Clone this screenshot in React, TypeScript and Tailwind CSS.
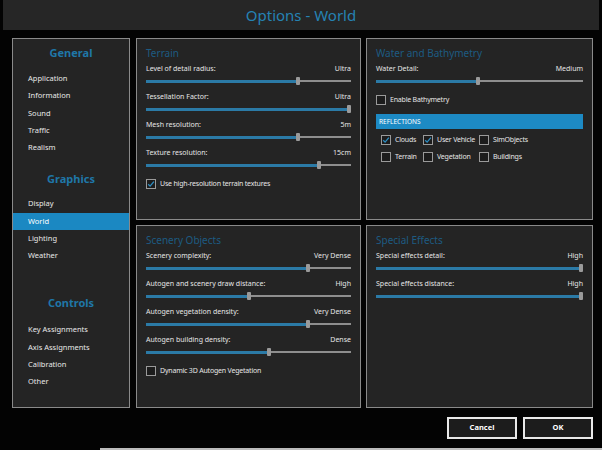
import React from "react";

type SliderProps = { label: string; value: string; pct: number };

function Slider({ label, value, pct }: SliderProps) {
  return (
    <div className="mt-[7px] first:mt-0">
      <div className="flex justify-between text-[7px] leading-[10px] text-[#e6e6e6]">
        <span>{label}</span>
        <span>{value}</span>
      </div>
      <div className="mt-[3px] flex h-[8px] items-center">
        <div className="h-[3px] bg-[#2b7aa6]" style={{ width: `calc(${pct}% - 2px)` }} />
        <div className="h-[8px] w-[4px] shrink-0 rounded-[1px] bg-[#9a9a9a]" />
        <div className="h-[2px] flex-1 bg-[#8e8e8e]" />
      </div>
    </div>
  );
}

function Check({ label, checked = false }: { label: string; checked?: boolean }) {
  return (
    <div className="flex items-center gap-[4px]">
      <div className="flex h-[10px] w-[10px] shrink-0 items-center justify-center border border-[#9a9a9a] bg-[#1c1c1c]">
        {checked && (
          <svg width="8" height="8" viewBox="0 0 8 8">
            <path d="M1.2 4.2 L3.1 6.1 L6.9 1.6" fill="none" stroke="#2e8fc4" strokeWidth="1.3" />
          </svg>
        )}
      </div>
      <span className="whitespace-nowrap text-[7px] leading-[10px] tracking-[-0.2px] text-[#e6e6e6]">{label}</span>
    </div>
  );
}

function Panel({ title, children }: { title: string; children: React.ReactNode }) {
  return (
    <div className="border border-[#8a8a8a] bg-[#242424] px-[9px] pt-[7px]">
      <div className="text-[10px] leading-[14px] text-[#1d5b82]">{title}</div>
      <div className="mt-[4px]">{children}</div>
    </div>
  );
}

const groups = [
  { title: "General", items: ["Application", "Information", "Sound", "Traffic", "Realism"], gap: "mt-0", inner: "mt-[7px]" },
  { title: "Graphics", items: ["Display", "World", "Lighting", "Weather"], gap: "mt-[13px]", inner: "mt-[6px]" },
  { title: "Controls", items: ["Key Assignments", "Axis Assignments", "Calibration", "Other"], gap: "mt-[29px]", inner: "mt-[8px]" },
];

export default function App() {
  return (
    <div
      className="flex h-[450px] w-[602px] flex-col overflow-hidden bg-[#030303]"
      style={{ fontFamily: '"Noto Sans", "Open Sans", sans-serif' }}
    >
      <div className="mx-[3px] flex h-[30px] shrink-0 items-center justify-center bg-[#262626]">
        <span className="text-[15px] text-[#2582b3]">Options - World</span>
      </div>

      <div className="mt-[8px] flex h-[370px] pl-[12px]">
        {/* left navigation */}
        <div className="w-[118px] shrink-0 border border-[#8a8a8a] bg-[#242424] pt-[4px]">
          {groups.map((g) => (
            <div key={g.title} className={g.gap}>
              <div className="text-center text-[11px] font-bold leading-[20px] text-[#1f77a8]">{g.title}</div>
              <div className={g.inner}>
                {g.items.map((it) => (
                  <div
                    key={it}
                    className={`h-[17.25px] pl-[15px] text-[7.5px] leading-[17px] ${
                      it === "World" ? "bg-[#1b88c2] text-white" : "text-[#e8e8e8]"
                    }`}
                  >
                    {it}
                  </div>
                ))}
              </div>
            </div>
          ))}
        </div>

        {/* settings panels */}
        <div className="ml-[6px] grid w-[457px] grid-cols-[225px_227px] grid-rows-[182px_183px] gap-x-[5px] gap-y-[5px]">
          <Panel title="Terrain">
            <Slider label="Level of detail radius:" value="Ultra" pct={74} />
            <Slider label="Tessellation Factor:" value="Ultra" pct={100} />
            <Slider label="Mesh resolution:" value="5m" pct={74} />
            <Slider label="Texture resolution:" value="15cm" pct={84.5} />
            <div className="mt-[10px]">
              <Check label="Use high-resolution terrain textures" checked />
            </div>
          </Panel>

          <Panel title="Water and Bathymetry">
            <Slider label="Water Detail:" value="Medium" pct={49.5} />
            <div className="mt-[10px]">
              <Check label="Enable Bathymetry" />
            </div>
            <div className="mt-[9px] flex h-[15px] items-center bg-[#1d8ac4] pl-[3px] text-[6.5px] text-white">
              REFLECTIONS
            </div>
            <div className="mt-[6px] grid grid-cols-[42px_56px_auto] gap-y-[7px] pl-[5px]">
              <Check label="Clouds" checked />
              <Check label="User Vehicle" checked />
              <Check label="SimObjects" />
              <Check label="Terrain" />
              <Check label="Vegetation" />
              <Check label="Buildings" />
            </div>
          </Panel>

          <Panel title="Scenery Objects">
            <Slider label="Scenery complexity:" value="Very Dense" pct={79} />
            <Slider label="Autogen and scenery draw distance:" value="High" pct={50} />
            <Slider label="Autogen vegetation density:" value="Very Dense" pct={79} />
            <Slider label="Autogen building density:" value="Dense" pct={60} />
            <div className="mt-[10px]">
              <Check label="Dynamic 3D Autogen Vegetation" />
            </div>
          </Panel>

          <Panel title="Special Effects">
            <Slider label="Special effects detail:" value="High" pct={100} />
            <Slider label="Special effects distance:" value="High" pct={100} />
          </Panel>
        </div>
      </div>

      <div className="mt-[9px] flex justify-end gap-[6px] pr-[9px]">
        <button className="h-[22px] w-[70px] border-2 border-[#e8e8e8] bg-[#1c1c1c] text-[7.5px] font-bold text-white">
          Cancel
        </button>
        <button className="h-[22px] w-[70px] border-2 border-[#e8e8e8] bg-[#1c1c1c] text-[7.5px] font-bold text-white">
          OK
        </button>
      </div>

      <div className="mt-auto ml-[100px] h-[2px] bg-[#bdbdbd]" />
    </div>
  );
}
